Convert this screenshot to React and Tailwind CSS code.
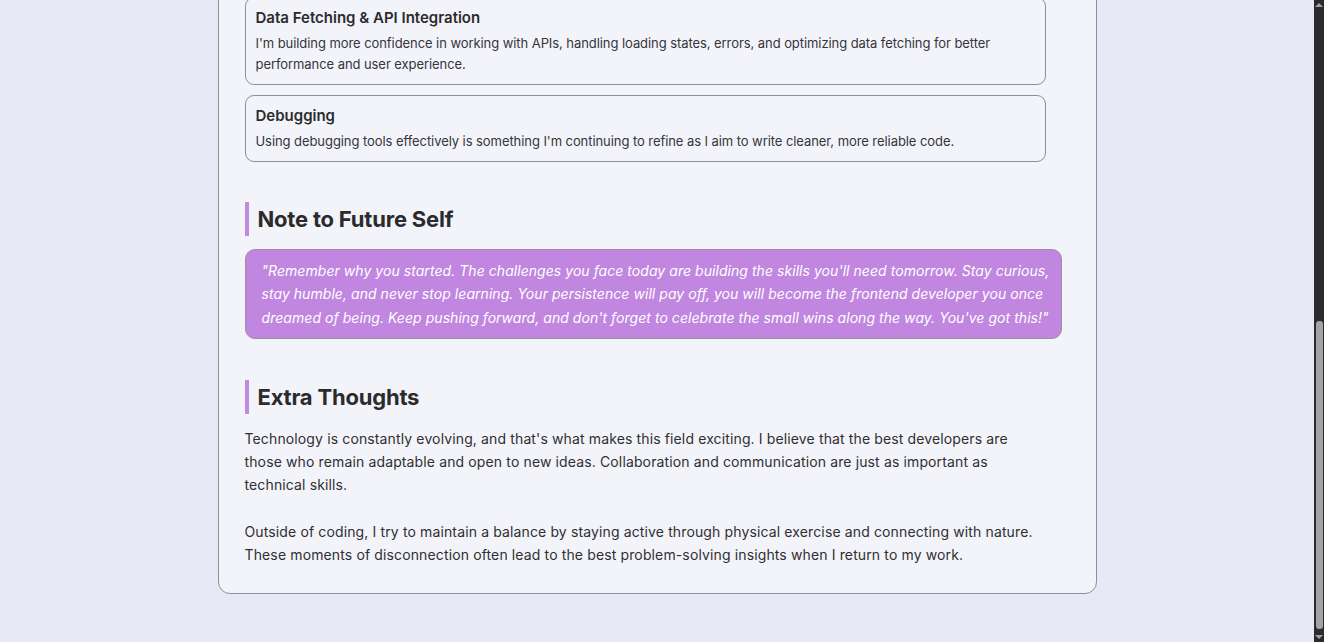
const FONT = "font-['Inter',_'Noto_Sans',_sans-serif]"

const growthItems = [
  {
    title: 'State Management',
    text: 'Learning how to structure state across components and when to reach for context or a dedicated store.',
  },
  {
    title: 'Data Fetching & API Integration',
    text: "I'm building more confidence in working with APIs, handling loading states, errors, and optimizing data fetching for better performance and user experience.",
  },
  {
    title: 'Debugging',
    text: "Using debugging tools effectively is something I'm continuing to refine as I aim to write cleaner, more reliable code.",
  },
]

function SectionTitle({ children }) {
  return (
    <h2 className="border-l-4 border-[#c08ae0] pl-[9px] text-[22px] font-bold leading-[34px] text-[#2b2b2e] tracking-[-0.2px]">
      {children}
    </h2>
  )
}

function GrowthItem({ title, text }) {
  return (
    <div className="w-[801px] rounded-[9px] border border-[#8f8f94] px-[10px] pt-[10px] pb-[9px]">
      <h3 className="text-[15px] font-semibold leading-[20px] text-[#2b2b2e]">{title}</h3>
      <p className="mt-[5px] text-[13px] leading-[21px] tracking-[-0.07px] text-[#35353a]">{text}</p>
    </div>
  )
}

function Scrollbar() {
  return (
    <div className="flex w-[10px] flex-col items-center bg-[#2b2b2b]">
      <div className="mt-[3px] h-0 w-0 border-x-[4px] border-b-[4px] border-x-transparent border-b-[#a3a3a3]" />
      <div className="flex-1" />
      <div className="ml-[1px] h-[308px] w-[7px] rounded-[3px] bg-[#a3a3a3]" />
      <div className="mt-[6px] mb-[3px] h-0 w-0 border-x-[4px] border-t-[4px] border-x-transparent border-t-[#a3a3a3]" />
    </div>
  )
}

export default function App() {
  return (
    <div className={`flex h-[642px] w-full overflow-hidden bg-[#e9e8f6] ${FONT}`}>
      <div className="flex flex-1 flex-col items-center justify-end pb-[48px]">
        <div className="w-[879px] rounded-[12px] border border-[#8f8f94] bg-[#f3f4f9] px-[26px] pt-[26px] pb-[27px]">
          <SectionTitle>Areas for Growth</SectionTitle>
          <div className="mt-[13px] flex flex-col gap-[10px]">
            {growthItems.map((item) => (
              <GrowthItem key={item.title} {...item} />
            ))}
          </div>

          <div className="mt-[40px]">
            <SectionTitle>Note to Future Self</SectionTitle>
          </div>
          <div className="mt-[13px] w-[817px] rounded-[10px] border border-[#9a8fa6] bg-[#c086e0] pl-[16px] pr-[8px] py-[9px]">
            <p className="text-[14px] italic leading-[23.5px] tracking-[0.05px] text-white">
              "Remember why you started. The challenges you face today are building the skills you'll need tomorrow. Stay curious, stay humble, and never stop learning. Your persistence will pay off, you will become the frontend developer you once dreamed of being. Keep pushing forward, and don't forget to celebrate the small wins along the way. You've got this!"
            </p>
          </div>

          <div className="mt-[41px]">
            <SectionTitle>Extra Thoughts</SectionTitle>
          </div>
          <div className="mt-[13px] flex w-[800px] flex-col gap-[24px] text-[14px] leading-[23px] tracking-[0.13px] text-[#2f2f33]">
            <p>
              Technology is constantly evolving, and that's what makes this field exciting. I believe that the best developers are those who remain adaptable and open to new ideas. Collaboration and communication are just as important as technical skills.
            </p>
            <p>
              Outside of coding, I try to maintain a balance by staying active through physical exercise and connecting with nature. These moments of disconnection often lead to the best problem-solving insights when I return to my work.
            </p>
          </div>
        </div>
      </div>
      <Scrollbar />
    </div>
  )
}
